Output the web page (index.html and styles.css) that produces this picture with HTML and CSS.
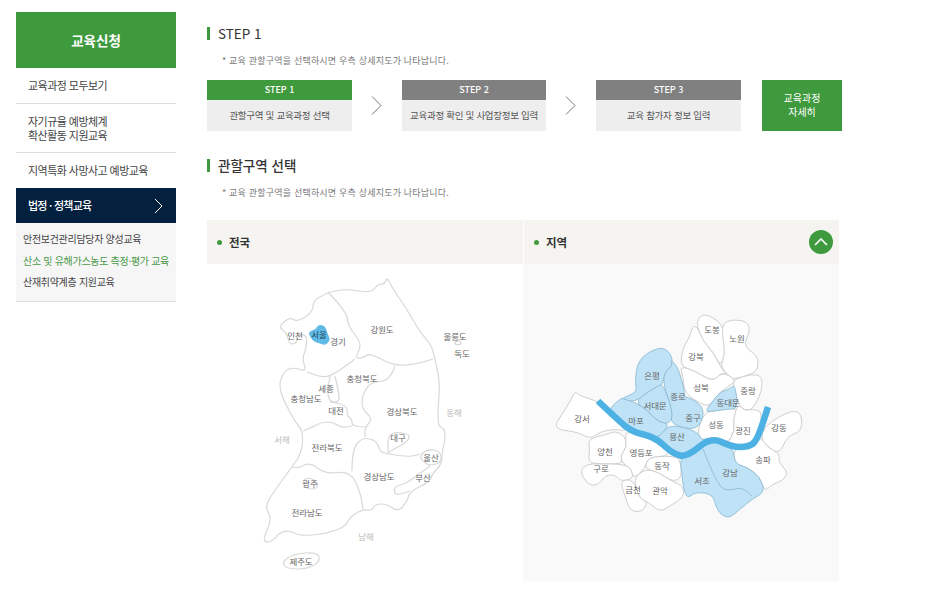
FILE: index.html
```html
<!DOCTYPE html>
<html lang="ko">
<head>
<meta charset="utf-8">
<title>교육신청</title>
<link rel="stylesheet" href="styles.css">
</head>
<body>
<div class="page">
  <aside class="side">
    <h2 class="side-head">교육신청</h2>
    <a class="side-item">교육과정 모두보기</a>
    <a class="side-item two">자기규율 예방체계<br>확산활동 지원교육</a>
    <a class="side-item plain">지역특화 사망사고 예방교육</a>
    <a class="side-active">법정 · 정책교육
      <svg class="chev" width="9" height="16" viewBox="0 0 9 16"><path d="M1 1l7 7-7 7" fill="none" stroke="#fff" stroke-width="1"/></svg>
    </a>
    <div class="side-sub">
      <a>안전보건관리담당자 양성교육</a>
      <a class="on">산소 및 유해가스농도 측정·평가 교육</a>
      <a>산재취약계층 지원교육</a>
    </div>
  </aside>
  <main class="main">
    <h3 class="title en">STEP 1</h3>
    <p class="note">* 교육 관할구역을 선택하시면 우측 상세지도가 나타납니다.</p>
    <div class="steps">
      <div class="step"><div class="step-head green">STEP 1</div><div class="step-body">관할구역 및 교육과정 선택</div></div>
      <svg class="arrow" width="11" height="19" viewBox="0 0 11 19"><path d="M1 .5l9 9-9 9" fill="none" stroke="#777" stroke-width="1"/></svg>
      <div class="step narrow"><div class="step-head">STEP 2</div><div class="step-body">교육과정 확인 및 사업장정보 입력</div></div>
      <svg class="arrow" width="11" height="19" viewBox="0 0 11 19"><path d="M1 .5l9 9-9 9" fill="none" stroke="#777" stroke-width="1"/></svg>
      <div class="step"><div class="step-head">STEP 3</div><div class="step-body">교육 참가자 정보 입력</div></div>
      <a class="detail">교육과정<br>자세히</a>
    </div>
    <h3 class="title second">관할구역 선택</h3>
    <p class="note">* 교육 관할구역을 선택하시면 우측 상세지도가 나타납니다.</p>
    <div class="panel">
      <section class="pane">
        <div class="pane-head"><span class="dot"></span>전국</div>
        <svg class="map" width="315" height="317" viewBox="207 265 315 317">
          <g class="land">
            <path d="M386.7 278 393 290 406.7 310 420 333 431.7 346.7 435 360 440 383 438 410 438 427 445 430 445 442 442 452 442 465 432 475 430 483 410 492 407 503 398 513 387 505 375 505 372 512 363 510 350 518 345 528 325 535 300 537 288 531 278 535 275 540 267 544 263 540 272 520 265 508 272 495 292 468 302 453 303 432 295 423 278 390 283 373 293 368 307 373 302 360 307 347 306 335 297 337 296 345 289 345 287 334 278 328 290 318 297 323 313 313 313 302 325 295 330 293 347 290 363 293 373 292 378 285 385 285z"/>
            <path d="M328 293 347 313 348 327 360 342 360 350 355 360 365 358 368 355 375 357 395 367 417 365 433 360"/>
            <path d="M355 360 333 377 320 378 307 373"/>
            <path d="M395 367 390 382 370 383 362 397 362 410 373 420 365 428 365 438"/>
            <path d="M330 377 327 393 330 403 340 403 338 390 335 377M330 403 347 405 347 417 352 420 352 427 365 428"/>
            <path d="M303 432 313 428 322 423 333 423 342 429 352 427"/>
            <path d="M292 468 297 470 310 463 325 475 350 472 360 492 363 510"/>
            <path d="M352 472 352 450 363 438 377 442 380 453 388 455 410 458 420 455"/>
            <path d="M388 437 395 433 410 435 408 442 398 448 390 452 388 455z"/>
            <path d="M420 457 427 450 440 452 442 463 430 467 422 462z"/>
            <path d="M430 467 415 478 405 485 395 487 394 494 398 496 410 492"/>
            <path d="M302 483 308 478 318 483 317 490 307 490z"/>
            <path d="M282 563 293 555 318 553 320 563 307 570 287 570z"/>
            <ellipse cx="458" cy="344" rx="3" ry="1.6"/>
          </g>
          <path class="seoul" d="M308 333 316 331 318 326 325 327 327 335 330 340 326 346 320 344 313 342z"/>
          <g class="lbl">
            <text x="319" y="339" class="strong">서울</text><text x="295" y="340">인천</text><text x="338" y="346">경기</text>
            <text x="382" y="334">강원도</text><text x="455" y="341">울릉도</text><text x="462" y="358">독도</text>
            <text x="362" y="383">충청북도</text><text x="326" y="393">세종</text><text x="306" y="403">충청남도</text>
            <text x="336" y="415">대전</text><text x="402" y="416">경상북도</text><text x="454" y="417" class="sea">동해</text>
            <text x="282" y="444" class="sea">서해</text><text x="327" y="452">전라북도</text><text x="398" y="442">대구</text>
            <text x="431" y="462">울산</text><text x="379" y="481">경상남도</text><text x="423" y="482">부산</text>
            <text x="310" y="488">광주</text><text x="307" y="517">전라남도</text><text x="366" y="541" class="sea">남해</text>
            <text x="301" y="566">제주도</text>
          </g>
        </svg>
      </section>
      <section class="pane right">
        <div class="pane-head"><span class="dot"></span>지역
          <span class="toggle"><svg width="14" height="8" viewBox="0 0 14 8"><path d="M1 7l6-6 6 6" fill="none" stroke="#fff" stroke-width="1.6"/></svg></span>
        </div>
        <svg class="map" width="316" height="317" viewBox="523 265 316 317">
          <g class="white">
            <path d="M575 392 580 397 598 402 610 413 620 425 628 432 613 430 600 433 590 440 578 433 553 430 562 415 570 403z"/>
            <path d="M588 440 608 435 615 432 625 437 627 448 620 457 623 465 598 465 588 463 590 450z"/>
            <path d="M587 465 580 472 587 485 597 487 607 475 617 477 620 482 633 480 632 470 623 465 598 465z"/>
            <path d="M620 457 627 448 625 437 628 432 660 440 672 457 648 458 645 470 633 480 632 470 623 465z"/>
            <path d="M648 458 672 457 680 460 682 478 673 483 658 473 645 470z"/>
            <path d="M620 482 633 480 640 500 648 503 642 513 630 512 625 497z"/>
            <path d="M633 480 645 470 658 473 673 483 683 487 684 498 670 507 660 513 648 503 640 500z"/>
            <path d="M703 315 698 320 697 327 703 342 713 353 720 367 725 357 725 340 722 325 712 318z"/>
            <path d="M722 325 733 320 748 323 750 333 743 347 758 357 758 370 752 375 735 380 730 378 720 367 725 357 723 340z"/>
            <path d="M692 328 697 327 703 342 713 353 720 367 728 378 722 373 713 383 695 372 680 367 683 348 690 338z"/>
            <path d="M680 367 695 372 713 383 722 373 735 380 733 385 720 392 712 405 705 407 685 395 683 378z"/>
            <path d="M735 380 752 375 762 377 762 392 753 410 745 412 738 405 733 385z"/>
            <path d="M705 413 715 412 738 408 733 420 735 432 727 445 712 437 702 442 697 432z"/>
            <path d="M738 405 745 412 753 410 763 413 757 440 748 447 730 447 727 445 735 432 733 420z"/>
            <path d="M770 422 800 408 803 432 787 437 780 455 767 448 760 437z"/>
            <path d="M760 437 767 448 780 455 778 463 788 473 783 482 772 485 765 493 760 478 747 468 735 465 733 450 750 447z"/>
          </g>
          <g class="blue">
            <path d="M660 347 671 354 673 367 665 372 663 385 658 387 648 393 635 403 622 400 625 398 637 393 635 383 638 360z"/>
            <path d="M673 367 670 360 678 368 685 393 683 397 697 402 705 413 697 432 670 425 673 413 663 385 665 372z"/>
            <path d="M658 387 663 385 673 413 670 425 658 423 648 412 635 403 648 393z"/>
            <path d="M622 400 635 403 648 412 658 423 670 425 660 437 655 438 632 433 617 420 608 410 623 398z"/>
            <path d="M670 425 697 432 702 442 710 438 687 458 673 455 655 438 660 437z"/>
            <path d="M735 385 738 410 728 410 715 412 705 413 712 403 720 393 730 390z"/>
            <path d="M680 460 687 458 703 449 712 438 733 448 735 465 747 468 760 478 765 493 752 500 738 512 728 520 717 512 713 495 695 493 687 500 683 487 682 475z"/>
            <path class="open" d="M703 450 710 468 720 488 728 492 742 488 752 497"/>
          </g>
          <path class="river" d="M598 402 617 420 632 433 655 438 673 455 687 458 711 438 732 448 748 448 757 442 768 408"/>
          <g class="lbl">
            <text x="712" y="334">도봉</text><text x="737" y="343">노원</text><text x="696" y="361">강북</text>
            <text x="652" y="380">은평</text><text x="701" y="392">성북</text><text x="748" y="395">중랑</text>
            <text x="678" y="401">종로</text><text x="655" y="410">서대문</text><text x="728" y="407">동대문</text>
            <text x="582" y="423">강서</text><text x="636" y="425">마포</text><text x="693" y="422">중구</text>
            <text x="716" y="429">성동</text><text x="743" y="435">광진</text><text x="779" y="432">강동</text>
            <text x="677" y="441">용산</text><text x="605" y="456">양천</text><text x="641" y="457">영등포</text>
            <text x="662" y="470">동작</text><text x="763" y="464">송파</text><text x="601" y="473">구로</text>
            <text x="730" y="477">강남</text><text x="702" y="485">서초</text><text x="633" y="494">금천</text>
            <text x="660" y="495">관악</text>
          </g>
        </svg>
      </section>
    </div>
  </main>
</div>
<script src="map.js"></script>
</body>
</html>
```
FILE: styles.css
```css
* { box-sizing: border-box; }
html, body { margin: 0; padding: 0; background: #fff; }
body { font-family: "Noto Sans CJK KR", "Noto Sans", sans-serif; color: #333; overflow: hidden; }
a { display: block; color: inherit; text-decoration: none; }
h2, h3, p { margin: 0; }

.page { display: flex; align-items: flex-start; gap: 31px; padding: 12px 0 0 16px; width: 936px; height: 590px; }

.side { width: 160px; flex: none; }
.side-head { height: 56px; background: #3f9a3e; color: #fff; font-size: 13.5px; font-weight: 700; line-height: 56px; text-align: center; }
.side-item { height: 36px; padding-left: 12px; font-size: 11px; line-height: 35px; color: #444; border-bottom: 1px solid #ddd; letter-spacing: -.55px; }
.side-item.two { height: 49px; padding-top: 10px; line-height: 14px; }
.side-item.plain { height: 35px; border-bottom: 0; }
.side-active { position: relative; height: 35px; background: #03203f; color: #fff; padding-left: 12px; font-size: 11px; font-weight: 500; line-height: 35px; letter-spacing: -.75px; }
.chev { position: absolute; right: 13px; top: 10px; }
.side-sub { height: 79px; padding: 5px 0 0 7px; background: #f6f6f6; border-bottom: 1px solid #ddd; font-size: 10px; line-height: 21.5px; letter-spacing: -.3px; white-space: nowrap; color: #444; }
.side-sub .on { color: #4a9a4a; }

.main { width: 640px; flex: none; }
.title { height: 13px; border-left: 3px solid #3f9a3e; padding-left: 8px; margin-top: 15px; font-size: 13.5px; font-weight: 500; line-height: 13px; color: #333; }
.title.en { font-weight: 400; }
.title.second { margin-top: 28px; }
.note { margin: 14px 0 0 15px; height: 13px; font-size: 9px; line-height: 13px; color: #777; letter-spacing: .2px; white-space: nowrap; }
.steps { display: flex; align-items: flex-start; margin-top: 13px; width: 635px; }
.step { width: 145px; flex: none; }
.step.narrow { width: 144px; }
.step-head { height: 20px; background: #808080; color: #fff; font-size: 9px; font-weight: 500; line-height: 20px; text-align: center; }
.step-head.green { background: #3f9a3e; }
.step-body { height: 31px; background: #eeeeee; color: #555; font-size: 9.5px; line-height: 31px; text-align: center; letter-spacing: -.28px; white-space: nowrap; }
.arrow { flex: none; margin: 16px 20px 0 19px; }
.detail { width: 80px; height: 51px; margin-left: 21px; padding-top: 11px; background: #3f9a3e; color: #fff; font-size: 10px; line-height: 14px; text-align: center; }

.panel { display: flex; margin-top: 21px; width: 632px; height: 361px; }
.pane { width: 316px; flex: none; }
.pane.right { background: #f9f9f9; }
.pane-head { position: relative; display: flex; align-items: center; height: 44px; padding-left: 10px; background: #f5f4f0; font-size: 11.5px; font-weight: 700; color: #333; }
.pane.right .pane-head { border-left: 1px solid #fff; }
.dot { width: 5px; height: 5px; margin-right: 7px; border-radius: 50%; background: #3f9a3e; }
.toggle { position: absolute; right: 6px; top: 10px; display: flex; align-items: center; justify-content: center; width: 24px; height: 24px; border-radius: 50%; background: #3f9a3e; }
.map { display: block; }

.land path, .land ellipse { fill: none; stroke: #d8d8d8; stroke-width: 1.2; stroke-linejoin: round; }
.seoul { fill: #5fbae6; stroke: #5fbae6; stroke-width: 1; stroke-linejoin: round; }
.white path { fill: #fff; stroke: #cfcfcf; stroke-width: 1; stroke-linejoin: round; }
.blue path { fill: #bfe2f6; stroke: #8fbcd4; stroke-width: .9; stroke-linejoin: round; }
.blue path.open { fill: none; }
.river { fill: none; stroke: #4db1e3; stroke-width: 6.5; stroke-linejoin: round; }
.lbl text { font-size: 8.5px; fill: #666; text-anchor: middle; letter-spacing: -.1px; }
.lbl .strong { fill: #1f4a63; }
.lbl .sea { fill: #bbb; }
```
FILE: map.js
```js
// Round the region outlines: each stored point becomes a quadratic control point.
document.querySelectorAll('.map path').forEach(function (el) {
  var parts = el.getAttribute('d').split('M').filter(Boolean);
  var out = parts.map(function (part) {
    var closed = /z\s*$/.test(part);
    var n = part.replace('z', '').trim().split(/\s+/).map(Number);
    var p = [];
    for (var i = 0; i < n.length; i += 2) p.push([n[i], n[i + 1]]);
    var mid = function (a, b) { return ((a[0] + b[0]) / 2) + ' ' + ((a[1] + b[1]) / 2); };
    var d, j;
    if (closed) {
      d = 'M' + mid(p[p.length - 1], p[0]);
      for (j = 0; j < p.length; j++) d += 'Q' + p[j].join(' ') + ' ' + mid(p[j], p[(j + 1) % p.length]);
      return d + 'z';
    }
    d = 'M' + p[0].join(' ');
    for (j = 1; j < p.length - 1; j++) d += 'Q' + p[j].join(' ') + ' ' + mid(p[j], p[j + 1]);
    return d + 'L' + p[p.length - 1].join(' ');
  });
  el.setAttribute('d', out.join(''));
});
```
